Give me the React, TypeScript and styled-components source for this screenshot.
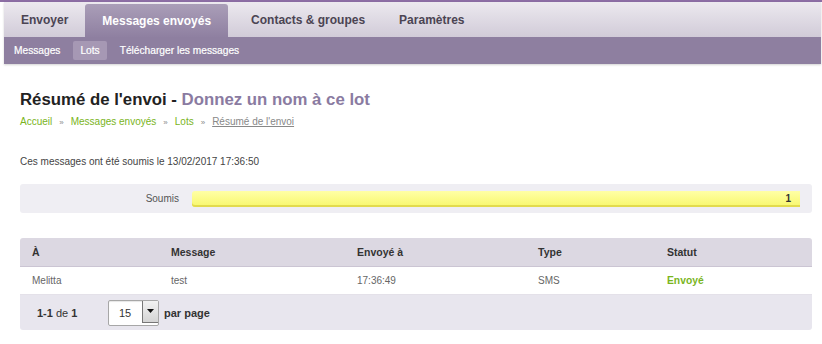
import styled, {createGlobalStyle} from "styled-components";

const GlobalStyle = createGlobalStyle`
  body {
    margin: 0;
    background: #ffffff;
    font-family: "Liberation Sans", Arial, sans-serif;
    color: #444;
  }
`

const tabs = ["Envoyer", "Messages envoyés", "Contacts & groupes", "Paramètres"]
const subTabs = ["Messages", "Lots", "Télécharger les messages"]

const columns = [
    {label: "À", width: 139},
    {label: "Message", width: 186},
    {label: "Envoyé à", width: 181},
    {label: "Type", width: 129},
    {label: "Statut", width: 157},
]

export default function App() {
    return (
        <>
            <GlobalStyle/>
            <TopLine/>
            <Header>
                <TabBar>
                    {tabs.map(tab =>
                        <Tab key={tab} $active={tab === "Messages envoyés"}>{tab}</Tab>)}
                </TabBar>
                <SubBar>
                    {subTabs.map(item =>
                        <SubTab key={item} $active={item === "Lots"}>{item}</SubTab>)}
                </SubBar>
            </Header>

            <Main>
                <Title>Résumé de l'envoi - <TitleName>Donnez un nom à ce lot</TitleName></Title>
                <Breadcrumb>
                    <Crumb>Accueil</Crumb><Sep>»</Sep>
                    <Crumb>Messages envoyés</Crumb><Sep>»</Sep>
                    <Crumb>Lots</Crumb><Sep>»</Sep>
                    <CurrentCrumb>Résumé de l'envoi</CurrentCrumb>
                </Breadcrumb>

                <Info>Ces messages ont été soumis le 13/02/2017 17:36:50</Info>

                <Summary>
                    <SummaryLabel>Soumis</SummaryLabel>
                    <Bar style={{width: "100%"}}>1</Bar>
                </Summary>

                <TableBox>
                    <Table>
                        <colgroup>
                            {columns.map(c => <col key={c.label} style={{width: c.width}}/>)}
                        </colgroup>
                        <thead>
                        <tr>
                            {columns.map(c => <Th key={c.label}>{c.label}</Th>)}
                        </tr>
                        </thead>
                        <tbody>
                        <tr>
                            <Td>Melitta</Td>
                            <Td>test</Td>
                            <Td>17:36:49</Td>
                            <Td>SMS</Td>
                            <Td $status>Envoyé</Td>
                        </tr>
                        </tbody>
                    </Table>
                    <Pager>
                        <Count><b>1-1</b> de <b>1</b></Count>
                        <Select>
                            <SelectValue>15</SelectValue>
                            <SelectButton>
                                <svg width="7" height="4" viewBox="0 0 7 4">
                                    <path d="M0 0h7L3.5 4z" fill="#111"/>
                                </svg>
                            </SelectButton>
                        </Select>
                        <PerPage>par page</PerPage>
                    </Pager>
                </TableBox>
            </Main>
        </>
    )
}

const TopLine = styled.div`
  height: 2px;
  background: #8c6ea4;
`

const Header = styled.header`
  margin: 0 1px 0 4px;
  box-shadow: 0 1px 2px rgba(0, 0, 0, 0.18);
`

const TabBar = styled.nav`
  display: flex;
  align-items: flex-end;
  height: 35px;
  background: linear-gradient(180deg, #ece9ef, #d1cbd8);
`

const Tab = styled.div<{ $active?: boolean }>`
  display: flex;
  align-items: center;
  height: ${p => p.$active ? "33px" : "35px"};
  padding: 0 17px;
  margin-right: ${p => p.$active ? "6px" : "0"};
  border-radius: 3px 3px 0 0;
  background: ${p => p.$active ? "linear-gradient(180deg, #aa9eb8, #8f80a1)" : "transparent"};
  color: ${p => p.$active ? "#ffffff" : "#4b4453"};
  font-size: 12px;
  font-weight: bold;
`

const SubBar = styled.div`
  display: flex;
  align-items: center;
  gap: 6px;
  height: 27px;
  padding-left: 3px;
  background: #8e7fa0;
`

const SubTab = styled.div<{ $active?: boolean }>`
  display: flex;
  align-items: center;
  height: 19px;
  padding: 0 7px;
  border-radius: 2px;
  background: ${p => p.$active ? "#a698b4" : "transparent"};
  color: #ffffff;
  font-size: 10.2px;
  -webkit-text-stroke: 0.2px #ffffff;
`

const Main = styled.main`
  padding: 25px 10px 0 20px;
`

const Title = styled.h1`
  margin: 0;
  font-size: 16.8px;
  line-height: 22px;
  font-weight: bold;
  color: #222;
`

const TitleName = styled.span`
  color: #8a7ba1;
`

const Breadcrumb = styled.div`
  margin-top: 4px;
  height: 14px;
  font-size: 10px;
  line-height: 14px;
`

const Crumb = styled.span`
  color: #7ab41c;
`

const Sep = styled.span`
  padding: 0 7px;
  color: #8a8a8a;
  font-size: 8px;
`

const CurrentCrumb = styled.span`
  color: #888;
  text-decoration: underline;
`

const Info = styled.p`
  margin: 26px 0 0;
  font-size: 10px;
  line-height: 14px;
  color: #444;
`

const Summary = styled.div`
  display: flex;
  align-items: center;
  gap: 13px;
  height: 29px;
  margin-top: 15px;
  padding-right: 12px;
  border-radius: 3px;
  background: #efeef3;
`

const SummaryLabel = styled.span`
  flex: 0 0 159px;
  text-align: right;
  font-size: 10px;
  color: #555;
`

const Bar = styled.div`
  box-sizing: border-box;
  height: 16px;
  padding-right: 9px;
  border-radius: 3px 0 0 3px;
  background: linear-gradient(180deg, #ffffa6, #f7f76c);
  box-shadow: inset 0 -2px 0 #e2db4d;
  text-align: right;
  font-size: 10px;
  font-weight: bold;
  line-height: 15px;
  color: #333;
`

const TableBox = styled.div`
  margin-top: 25px;
  border-radius: 3px;
  overflow: hidden;
`

const Table = styled.table`
  width: 100%;
  table-layout: fixed;
  border-collapse: collapse;
`

const Th = styled.th`
  height: 28px;
  padding: 0 0 0 12px;
  background: #dcd8e2;
  border-bottom: 1px solid #cbc5d3;
  text-align: left;
  font-size: 10.5px;
  font-weight: bold;
  color: #333;
`

const Td = styled.td<{ $status?: boolean }>`
  height: 27px;
  padding: 0 0 0 12px;
  border-bottom: 1px solid #e4e1e9;
  font-size: ${p => p.$status ? "10.3px" : "10px"};
  font-weight: ${p => p.$status ? "bold" : "normal"};
  color: ${p => p.$status ? "#7ab51d" : "#666"};
`

const Pager = styled.div`
  display: flex;
  align-items: center;
  height: 35px;
  padding-left: 17px;
  background: #e8e6ee;
  font-size: 11px;
  color: #333;
`

const Count = styled.span`
  width: 54px;
  margin-right: 17px;
`

const Select = styled.div`
  display: flex;
  box-sizing: border-box;
  width: 51px;
  height: 26px;
  border: 1px solid #a7a7a7;
  border-radius: 2px;
  background: #ffffff;
  box-shadow: inset 0 1px 1px rgba(0, 0, 0, 0.1);
`

const SelectValue = styled.span`
  flex: 1;
  display: flex;
  align-items: center;
  padding-left: 10px;
  font-size: 11px;
  color: #333;
`

const SelectButton = styled.span`
  display: flex;
  align-items: center;
  justify-content: center;
  width: 15px;
  margin: 0 0 2px;
  border-left: 1px solid #777;
  border-bottom: 1px solid #777;
  background: linear-gradient(180deg, #f2f2f2, #d4d4d4);
`

const PerPage = styled.span`
  margin-left: 5px;
  font-weight: bold;
`
